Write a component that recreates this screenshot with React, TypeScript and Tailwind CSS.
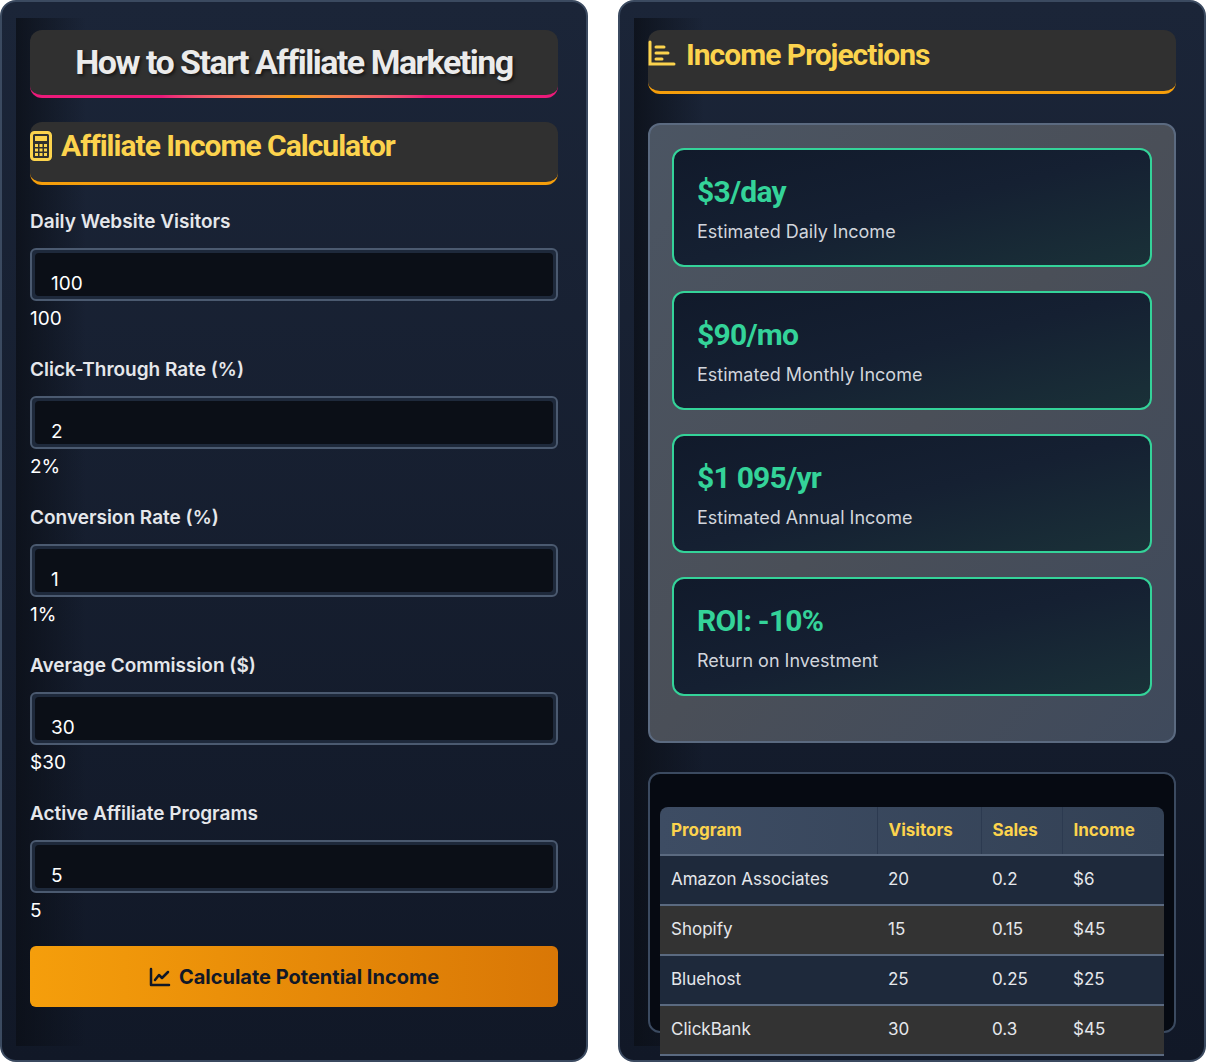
import React from "react";

const cond = { fontFamily: "Roboto, 'Liberation Sans', sans-serif" };

function CalcIcon() {
  return (
    <svg width="22" height="30" viewBox="0 0 22 30" fill="none">
      <rect x="1.5" y="1.5" width="19" height="27" rx="3" stroke="#fcd34d" strokeWidth="3" />
      <rect x="5" y="5" width="12" height="5" fill="#fcd34d" />
      {[0, 1, 2].map((r) =>
        [0, 1, 2].map((c) => (
          <rect key={r + "-" + c} x={5 + c * 4.5} y={13 + r * 4.5} width="3" height="3" fill="#fcd34d" />
        ))
      )}
    </svg>
  );
}

function BarIcon() {
  return (
    <svg width="28" height="26" viewBox="0 0 28 26" fill="none" stroke="#fcd34d" strokeWidth="3" strokeLinecap="round">
      <path d="M2 2v22h24" />
      <path d="M8 7h8M8 13h12M8 19h6" />
    </svg>
  );
}

function Field({ label, value, shown }: { label: string; value: string; shown: string }) {
  return (
    <div className="flex flex-col">
      <div className="text-[19px] font-semibold text-gray-200 h-[26px] leading-[26px] mb-[13px]">{label}</div>
      <div className="h-[53px] rounded-md border-2 border-[#4b5a70] bg-[#1e293b] p-[3px]">
        <div className="h-full bg-[#0b0f17] rounded-sm px-4 overflow-hidden">
          <div className="pt-[16px] text-[19px] text-white">
            <span className="block h-[24px] leading-[30px] overflow-hidden">{value}</span>
          </div>
        </div>
      </div>
      <div className="text-[19px] text-white mt-[5px] h-[26px] leading-[26px]">{shown}</div>
    </div>
  );
}

function Card({ v, l }: { v: string; l: string }) {
  return (
    <div className="h-[119px] rounded-xl border-2 border-[#34d399] bg-gradient-to-br from-[#111a2b] via-[#152032] to-[#1a3138] px-[23px] pt-[24px]">
      <div className="text-[30px] font-bold text-[#34d399] leading-[36px] tracking-tight" style={cond}>{v}</div>
      <div className="text-[18px] text-gray-300 mt-[8px]">{l}</div>
    </div>
  );
}

export default function App() {
  const rows = [
    ["Amazon Associates", "20", "0.2", "$6"],
    ["Shopify", "15", "0.15", "$45"],
    ["Bluehost", "25", "0.25", "$25"],
    ["ClickBank", "30", "0.3", "$45"],
  ];
  return (
    <div className="w-[1206px] h-[1063px] bg-white flex gap-[30px]" style={{ fontFamily: "Inter, 'Liberation Sans', sans-serif" }}>
      <div className="relative w-[588px] h-[1062px] rounded-2xl border-2 border-[#3b4a60] bg-gradient-to-b from-[#1b2538] to-[#111827] overflow-hidden px-[28px] pt-[28px]">
        <div className="absolute left-[14px] top-[16px] w-[70px] bottom-[14px] bg-gradient-to-r from-[#0b0f17] to-transparent opacity-80 pointer-events-none" />
        <div className="relative">
          <div className="h-[68px] rounded-xl bg-[#303030] border-b-[3px] border-[#ec1a7a] flex items-center justify-center relative">
            <div className="absolute bottom-[-3px] left-[25%] right-[25%] h-[3px] bg-gradient-to-r from-[#ec1a7a] via-[#f59e0b] to-[#ec1a7a]" />
            <span className="text-[34px] font-bold text-[#ebebeb] tracking-[-1.5px]" style={{ ...cond, textShadow: "2px 2px 3px rgba(0,0,0,0.5)" }}>How to Start Affiliate Marketing</span>
          </div>
          <div className="mt-[24px] h-[63px] rounded-xl bg-[#303030] border-b-[3px] border-[#f59e0b] flex items-start pt-[9px] gap-[9px]">
            <CalcIcon />
            <span className="text-[30px] font-bold text-[#fcd34d] tracking-[-1px] leading-[30px]" style={cond}>Affiliate Income Calculator</span>
          </div>
          <div className="mt-[24px] flex flex-col gap-[25px]">
            <Field label="Daily Website Visitors" value="100" shown="100" />
            <Field label="Click-Through Rate (%)" value="2" shown="2%" />
            <Field label="Conversion Rate (%)" value="1" shown="1%" />
            <Field label="Average Commission ($)" value="30" shown="$30" />
            <Field label="Active Affiliate Programs" value="5" shown="5" />
          </div>
          <button className="mt-[22px] w-full h-[61px] rounded-md bg-gradient-to-r from-[#f59e0b] to-[#d97706] flex items-center justify-center gap-2 text-[20px] font-bold text-[#111827]">
            <svg width="22" height="20" viewBox="0 0 22 20" fill="none" stroke="#111827" strokeWidth="2.5" strokeLinecap="round" strokeLinejoin="round">
              <path d="M2 2v16h18" /><path d="M6 13l4-5 3 3 6-6" />
            </svg>
            Calculate Potential Income
          </button>
        </div>
      </div>

      <div className="relative w-[588px] h-[1062px] rounded-2xl border-2 border-[#3b4a60] bg-gradient-to-b from-[#1b2538] to-[#111827] overflow-hidden px-[28px] pt-[28px]">
        <div className="absolute left-[14px] top-[16px] w-[70px] bottom-[14px] bg-gradient-to-r from-[#0b0f17] to-transparent opacity-80 pointer-events-none" />
        <div className="relative">
          <div className="h-[64px] rounded-xl bg-[#303030] border-b-[3px] border-[#f59e0b] flex items-start pt-[10px] gap-[10px]">
            <BarIcon />
            <span className="text-[30px] font-bold text-[#fcd34d] tracking-[-1px] leading-[30px]" style={cond}>Income Projections</span>
          </div>
          <div className="mt-[29px] h-[620px] rounded-xl border-2 border-[#5b6a80] bg-gradient-to-br from-[#4b5563] via-[#4a4f58] to-[#3f4a5c] px-[22px] pt-[23px] flex flex-col gap-[24px]">
            <Card v="$3/day" l="Estimated Daily Income" />
            <Card v="$90/mo" l="Estimated Monthly Income" />
            <Card v="$1 095/yr" l="Estimated Annual Income" />
            <Card v="ROI: -10%" l="Return on Investment" />
          </div>
          <div className="mt-[29px] h-[261px] rounded-xl border-2 border-[#3b4a60] bg-[#060a12] px-[10px] pt-[33px] overflow-visible">
            <table className="w-[504px] border-collapse text-[17px]">
              <thead>
                <tr className="h-[48px] bg-gradient-to-r from-[#3d4c63] to-[#334155] text-[#fcd34d] font-bold text-left">
                  <th className="pl-[11px] w-[217px] rounded-tl-lg border-b-2 border-[#5b6a80]">Program</th>
                  <th className="pl-[11px] w-[104px] border-l border-[#2c3a50] border-b-2 border-b-[#5b6a80]">Visitors</th>
                  <th className="pl-[11px] w-[81px] border-l border-[#2c3a50] border-b-2 border-b-[#5b6a80]">Sales</th>
                  <th className="pl-[11px] rounded-tr-lg border-l border-[#2c3a50] border-b-2 border-b-[#5b6a80]">Income</th>
                </tr>
              </thead>
              <tbody>
                {rows.map((r, i) => (
                  <tr key={i} className={"h-[50px] text-gray-200 border-b-2 border-[#5b6a80] " + (i % 2 === 0 ? "bg-[#1e293b]" : "bg-[#333333]")}>
                    {r.map((c, j) => (
                      <td key={j} className="pl-[11px]">{c}</td>
                    ))}
                  </tr>
                ))}
              </tbody>
            </table>
          </div>
        </div>
      </div>
    </div>
  );
}
